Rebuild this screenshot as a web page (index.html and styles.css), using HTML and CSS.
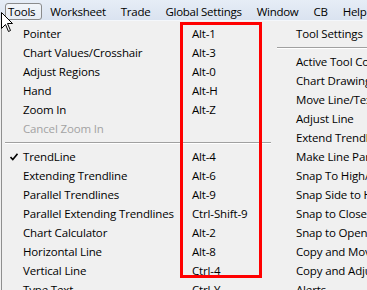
FILE: index.html
```html
<!DOCTYPE html>
<html>
<head>
<meta charset="utf-8">
<link rel="stylesheet" href="styles.css">
</head>
<body>
<div class="menubar">
  <span class="mb-item active">Tools</span>
  <span class="mb-item">Worksheet</span>
  <span class="mb-item">Trade</span>
  <span class="mb-item">Global Settings</span>
  <span class="mb-item">Window</span>
  <span class="mb-item">CB</span>
  <span class="mb-item">Help</span>
</div>
<div class="dropdown">
  <div class="col col1">
    <div class="row"><span class="label">Pointer</span><span class="key">Alt-1</span></div>
    <div class="row"><span class="label">Chart Values/Crosshair</span><span class="key">Alt-3</span></div>
    <div class="row"><span class="label">Adjust Regions</span><span class="key">Alt-0</span></div>
    <div class="row"><span class="label">Hand</span><span class="key">Alt-H</span></div>
    <div class="row"><span class="label">Zoom In</span><span class="key">Alt-Z</span></div>
    <div class="row disabled"><span class="label">Cancel Zoom In</span><span class="key"></span></div>
    <div class="sep sep1"></div>
    <div class="row checked"><span class="check"><svg width="8" height="8" viewBox="0 0 8 8"><path d="M0.5 4 L2.8 6.5 L7.5 0.8" fill="none" stroke="#000" stroke-width="1.6"/></svg></span><span class="label">TrendLine</span><span class="key">Alt-4</span></div>
    <div class="row"><span class="label">Extending Trendline</span><span class="key">Alt-6</span></div>
    <div class="row"><span class="label">Parallel Trendlines</span><span class="key">Alt-9</span></div>
    <div class="row"><span class="label">Parallel Extending Trendlines</span><span class="key">Ctrl-Shift-9</span></div>
    <div class="row"><span class="label">Chart Calculator</span><span class="key">Alt-2</span></div>
    <div class="row"><span class="label">Horizontal Line</span><span class="key">Alt-8</span></div>
    <div class="row"><span class="label">Vertical Line</span><span class="key">Ctrl-4</span></div>
    <div class="row"><span class="label">Type Text</span><span class="key">Ctrl-Y</span></div>
  </div>
  <div class="col col2">
    <div class="row"><span class="label">Tool Settings</span></div>
    <div class="sep sep2"></div>
    <div class="row"><span class="label">Active Tool Color</span></div>
    <div class="row"><span class="label">Chart Drawings</span></div>
    <div class="row"><span class="label">Move Line/Text</span></div>
    <div class="row"><span class="label">Adjust Line</span></div>
    <div class="row"><span class="label">Extend Trendline</span></div>
    <div class="row"><span class="label">Make Line Parallel</span></div>
    <div class="row"><span class="label">Snap To High/Low</span></div>
    <div class="row"><span class="label">Snap Side to High/Low</span></div>
    <div class="row"><span class="label">Snap to Close</span></div>
    <div class="row"><span class="label">Snap to Open</span></div>
    <div class="row"><span class="label">Copy and Move</span></div>
    <div class="row"><span class="label">Copy and Adjust</span></div>
    <div class="row"><span class="label">Alerts</span></div>
  </div>
</div>
<div class="highlight-box"></div>
<svg class="cursor" width="13" height="21" viewBox="0 0 13 21">
  <path d="M0.5 0.5 L0.5 16.5 L4.5 12.5 L7.5 19.5 L9.5 18.5 L6.5 11.5 L11.5 11.5 Z" fill="#fff" stroke="#000" stroke-width="1" stroke-linejoin="miter"/>
</svg>
</body>
</html>
```

FILE: styles.css
```css
html, body {
  margin: 0;
  padding: 0;
}
body {
  width: 367px;
  height: 290px;
  overflow: hidden;
  position: relative;
  background: #f0f0f0;
  font-family: "Open Sans", "Noto Sans", sans-serif;
  font-size: 11.5px;
  letter-spacing: -0.15px;
  color: #000;
}
.menubar {
  height: 21px;
  box-sizing: border-box;
  padding: 3px 0 0 5px;
  display: flex;
  background: linear-gradient(#e6edf6, #dae3f0);
  border-bottom: 1px solid #f4f7fb;
  letter-spacing: -0.26px;
}
.mb-item {
  height: 17px;
  box-sizing: border-box;
  line-height: 15px;
  padding: 0 6px 0 2px;
  margin-right: 5px;
  border: 1px solid transparent;
  border-radius: 3px;
  white-space: nowrap;
}
.mb-item.active {
  border-color: #8a8b8c;
  background: linear-gradient(#f2f5f9, #e6ecf4);
}
.dropdown {
  margin-left: 1px;
  border-left: 1px solid #8f8f8f;
  padding-top: 3px;
  display: flex;
  height: 300px;
  background: #f0f0f0;
}
.col1 {
  flex: none;
  width: 272px;
}
.col2 {
  flex: none;
  width: 200px;
}
.row {
  height: 19px;
  line-height: 19px;
  display: flex;
  position: relative;
  white-space: nowrap;
}
.col1 .row .label {
  padding-left: 21px;
  width: 148px;
  flex: none;
}
.col1 .row .key {
  padding-left: 21px;
}
.col2 .row .label {
  padding-left: 22px;
}
.row.disabled {
  color: #a3a3a3;
}
.check {
  position: absolute;
  left: 8px;
  top: 6px;
  width: 8px;
  height: 8px;
  display: flex;
}
.sep {
  height: 9px;
  box-sizing: border-box;
  padding-top: 4px;
}
.sep::before {
  content: "";
  display: block;
  height: 1px;
  background: #a0a0a0;
  border-bottom: 1px solid #ffffff;
}
.sep1 {
  margin: 0 3px 0 3px;
}
.sep2 {
  margin-left: 3px;
}
.highlight-box {
  position: absolute;
  left: 180px;
  top: 22px;
  width: 82px;
  height: 256px;
  box-sizing: border-box;
  border: 3px solid #ff0000;
}
.cursor {
  position: absolute;
  left: 1px;
  top: 12px;
}
```
